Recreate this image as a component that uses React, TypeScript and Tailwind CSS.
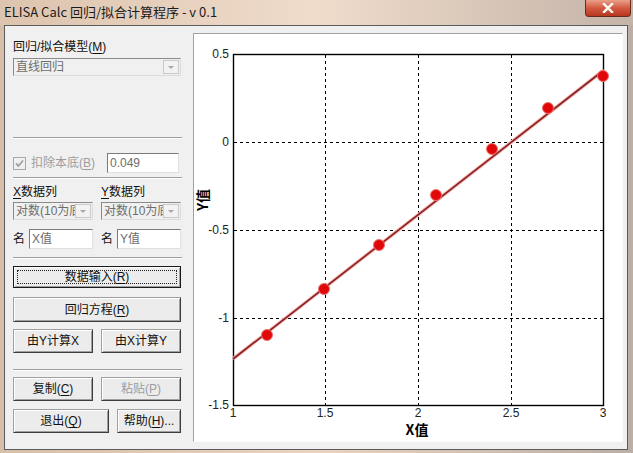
import React from 'react';

const ui = "font-['Liberation_Sans','Noto_Sans_CJK_SC',sans-serif]";

function U({ children }: { children: React.ReactNode }) {
  return <span className="underline underline-offset-2">{children}</span>;
}

function Separator({ className = '' }: { className?: string }) {
  return <div className={`w-[169px] h-[2px] border-t border-[#a0a0a0] border-b border-b-white ${className}`} />;
}

function Arrow() {
  return (
    <div className="w-[16px] h-[14px] mr-[1px] border border-[#c9c9c9] bg-[#f2f2f2] flex items-center justify-center shrink-0">
      <div className="w-0 h-0 border-l-[3px] border-r-[3px] border-t-[3px] border-l-transparent border-r-transparent border-t-[#a8a8a8]" />
    </div>
  );
}

function Combo({ text, className = '' }: { text: string; className?: string }) {
  return (
    <div className={`h-[18px] flex items-center bg-[#f0f0f0] border border-[#8a8a8a] border-r-[#dcdcdc] border-b-[#dcdcdc] ${className}`}>
      <span className="flex-1 pl-[2px] text-[#6d6d6d] whitespace-nowrap overflow-hidden leading-[16px]">{text}</span>
      <Arrow />
    </div>
  );
}

function Field({ text, className = '' }: { text: string; className?: string }) {
  return (
    <div className={`h-[20px] flex items-center bg-white border border-[#7a7a7a] border-r-[#e0e0e0] border-b-[#e0e0e0] pl-[2px] text-[#6d6d6d] ${className}`}>
      {text}
    </div>
  );
}

function Btn({
  children,
  className = '',
  disabled = false,
  focused = false,
}: {
  children: React.ReactNode;
  className?: string;
  disabled?: boolean;
  focused?: boolean;
}) {
  return (
    <div
      className={`relative flex items-center justify-center bg-[#ececec] border ${
        focused ? 'border-[#1a1a1a]' : 'border-[#a0a0a0] border-r-[#3c3c3c] border-b-[#3c3c3c]'
      } shadow-[inset_1px_1px_0_#ffffff,inset_-1px_-1px_0_#a0a0a0] ${disabled ? 'text-[#9d9d9d]' : 'text-[#111]'} ${className}`}
    >
      {focused && <div className="absolute inset-[3px] border border-dotted border-[#222]" />}
      <span className="relative">{children}</span>
    </div>
  );
}

function Chart() {
  const xs = [
    { v: '1', x: 233 },
    { v: '1.5', x: 325 },
    { v: '2', x: 418 },
    { v: '2.5', x: 511 },
    { v: '3', x: 603 },
  ];
  const ys = [
    { v: '0.5', y: 55 },
    { v: '0', y: 143 },
    { v: '-0.5', y: 231 },
    { v: '-1', y: 319 },
    { v: '-1.5', y: 406 },
  ];
  const pts = [
    [267, 336],
    [324, 290],
    [379, 246],
    [436, 196],
    [492, 150],
    [548, 109],
    [603, 77],
  ];
  return (
    <svg width="428" height="407" viewBox="194 35 428 407" className="block">
      <rect x="194" y="35" width="428" height="407" fill="#ffffff" />
      {[325, 418, 511].map((x) => (
        <line key={x} x1={x + 0.5} y1={56} x2={x + 0.5} y2={406} stroke="#000" strokeWidth="1" strokeDasharray="3 3" />
      ))}
      {[143, 231, 319].map((y) => (
        <line key={y} x1={234} y1={y + 0.5} x2={603} y2={y + 0.5} stroke="#000" strokeWidth="1" strokeDasharray="3 3" />
      ))}
      <rect x="233.5" y="55.5" width="370" height="351" fill="none" stroke="#000" strokeWidth="1.4" />
      <line x1="233" y1="360" x2="604" y2="71" stroke="#f3b4b4" strokeWidth="3.5" />
      <line x1="233" y1="360" x2="604" y2="71" stroke="#8a1e1e" strokeWidth="1.6" />
      {pts.map(([x, y]) => (
        <circle key={x} cx={x} cy={y} r="5.5" fill="#e00808" stroke="#f07070" strokeWidth="1" />
      ))}
      {ys.map((t) => (
        <text key={t.v} x="229" y={t.y + 4} textAnchor="end" fontSize="12" fill="#222" fontFamily="Liberation Sans, sans-serif">
          {t.v}
        </text>
      ))}
      {xs.map((t) => (
        <text key={t.v} x={t.x} y="418" textAnchor="middle" fontSize="12" fill="#222" fontFamily="Liberation Sans, sans-serif">
          {t.v}
        </text>
      ))}
      <text x="417" y="436" textAnchor="middle" fontSize="14" fontWeight="bold" fill="#000" fontFamily="Noto Sans CJK SC, sans-serif">
        X值
      </text>
      <text
        x="208"
        y="201"
        textAnchor="middle"
        fontSize="14"
        fontWeight="bold"
        fill="#000"
        fontFamily="Noto Sans CJK SC, sans-serif"
        transform="rotate(-90 208 201)"
      >
        Y值
      </text>
    </svg>
  );
}

export default function App() {
  return (
    <div className={`w-[633px] h-[453px] overflow-hidden flex flex-col bg-gradient-to-r from-[#d6bea8] via-[#ead3bf] to-[#bcaea4] ${ui} text-[12px]`}>
      {/* title bar */}
      <div className="relative h-[25px] shrink-0 flex items-center pl-[4px] bg-gradient-to-r from-[#dcc4ae] via-[#f0dccb] to-[#c4b4a8]">
        <span className="text-[13px] text-[#1b1b1b] font-['Noto_Sans_CJK_SC',sans-serif] leading-none -mt-[3px]">
          ELISA Calc 回归/拟合计算程序 - v 0.1
        </span>
        <div className="absolute right-[2px] top-0 w-[46px] h-[17px] rounded-b-[4px] border border-t-0 border-[#6b2a20] bg-gradient-to-b from-[#e9a08a] via-[#d25a40] to-[#b83620] flex items-center justify-center">
          <svg width="12" height="10" viewBox="0 0 12 10">
            <path d="M2 1 L10 9 M10 1 L2 9" stroke="#ffffff" strokeWidth="2.4" strokeLinecap="square" />
          </svg>
        </div>
      </div>

      {/* client */}
      <div className="ml-[4px] mr-[5px] h-[425px] shrink-0 flex bg-[#f0f0f0] border border-[#5c5c5c]">
        {/* left controls */}
        <div className="w-[188px] pl-[8px] flex flex-col shrink-0">
          <div className="mt-[14px] h-[14px] leading-[14px] text-[#111]">
            回归/拟合模型(<U>M</U>)
          </div>
          <Combo text="直线回归" className="mt-[4px] w-[168px]" />

          <Separator className="mt-[61px]" />

          <div className="mt-[14px] h-[20px] flex items-center">
            <div className="w-[13px] h-[13px] border border-[#a8a8a8] bg-[#f0f0f0] flex items-center justify-center">
              <svg width="9" height="9" viewBox="0 0 9 9">
                <path d="M1 4.5 L3.5 7 L8 1.5" stroke="#a0a0a0" strokeWidth="1.8" fill="none" />
              </svg>
            </div>
            <span className="ml-[5px] text-[#9d9d9d]">
              扣除本底(<U>B</U>)
            </span>
            <Field text="0.049" className="ml-[12px] w-[72px]" />
          </div>

          <Separator className="mt-[4px]" />

          <div className="mt-[6px] h-[14px] leading-[14px] flex text-[#111]">
            <span className="w-[88px]">
              <U>X</U>数据列
            </span>
            <span>
              <U>Y</U>数据列
            </span>
          </div>
          <div className="mt-[3px] flex gap-[8px]">
            <Combo text="对数(10为底" className="w-[80px]" />
            <Combo text="对数(10为底" className="w-[80px]" />
          </div>

          <div className="mt-[9px] flex items-center text-[#111]">
            <span className="w-[16px]">名</span>
            <Field text="X值" className="w-[64px]" />
            <span className="ml-[8px] w-[16px]">名</span>
            <Field text="Y值" className="w-[64px]" />
          </div>

          <Separator className="mt-[8px]" />

          <Btn focused className="mt-[7px] w-[168px] h-[22px]">
            数据输入(<U>R</U>)
          </Btn>
          <Btn className="mt-[9px] w-[168px] h-[25px]">
            回归方程(<U>R</U>)
          </Btn>
          <div className="mt-[7px] flex gap-[8px]">
            <Btn className="w-[80px] h-[24px]">由Y计算X</Btn>
            <Btn className="w-[80px] h-[24px]">由X计算Y</Btn>
          </div>

          <Separator className="mt-[16px]" />

          <div className="mt-[6px] flex gap-[8px]">
            <Btn className="w-[80px] h-[24px]">
              复制(<U>C</U>)
            </Btn>
            <Btn disabled className="w-[80px] h-[24px]">
              粘贴(<U>P</U>)
            </Btn>
          </div>
          <div className="mt-[8px] flex gap-[8px]">
            <Btn className="w-[96px] h-[24px]">
              退出(<U>Q</U>)
            </Btn>
            <Btn className="w-[64px] h-[24px]">
              帮助(<U>H</U>)...
            </Btn>
          </div>
        </div>

        {/* chart */}
        <div className="mt-[7px] w-[430px] h-[409px] shrink-0 border border-[#a0a0a0] border-r-[#fdfdfd] border-b-[#fdfdfd] bg-white">
          <Chart />
        </div>
      </div>
    </div>
  );
}
